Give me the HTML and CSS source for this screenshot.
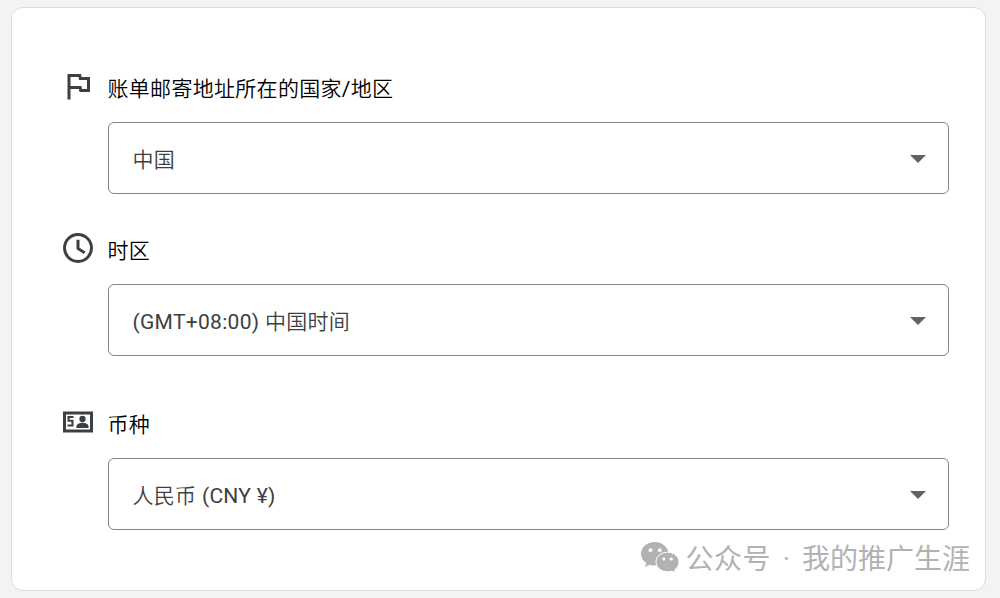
FILE: index.html
```html
<!DOCTYPE html>
<html lang="zh-CN">
<head>
    <meta charset="UTF-8">
    <meta name="viewport" content="width=device-width, initial-scale=1.0">
    <title>账单设置</title>
    <link rel="stylesheet" href="styles.css">
</head>

<body>
    <div class="card">
        <div class="field">
            <div class="field-header">
                <svg class="icon" viewBox="0 0 24 24"><path d="M12.36 6l.4 2H18v6h-3.36l-.4-2H7V6h5.36M14 4H5v17h2v-7h5.6l.4 2h7V6h-5.6L14 4z"/></svg>
                <span class="label"><span class="zh">账单邮寄地址所在的国家</span>/<span class="zh">地区</span></span>
            </div>
            <div class="select">
                <span class="zh">中国</span>
                <span class="arrow"></span>
            </div>
        </div>

        <div class="field">
            <div class="field-header">
                <svg class="icon" viewBox="0 0 24 24"><path d="M12 2a10 10 0 1 0 0 20 10 10 0 0 0 0-20zm0 18a8 8 0 1 1 0-16 8 8 0 0 1 0 16zM13 6.500h-2v6.300l4.900 3.200 1.100-1.700-4-2.500z"/></svg>
                <span class="label zh">时区</span>
            </div>
            <div class="select">
                <span>(GMT+08:00) <span class="zh">中国时间</span></span>
                <span class="arrow"></span>
            </div>
        </div>

        <div class="field field-currency">
            <div class="field-header">
                <svg class="icon" viewBox="0 0 24 24">
                    <path fill-rule="evenodd" d="M2 5h20v14H2zM4 7v10h16V7z"/>
                    <path d="M5 8h4v1.300H6.400v1.200H9V15H5v-1.300h2.600v-1.900H5z"/>
                    <circle cx="15" cy="10" r="2.100"/>
                    <path d="M11 16v-1.200c0-1.500 2.400-2.300 4-2.300s4 .8 4 2.300V16z"/>
                </svg>
                <span class="label zh">币种</span>
            </div>
            <div class="select">
                <span><span class="zh">人民币</span> (CNY ¥)</span>
                <span class="arrow"></span>
            </div>
        </div>
    </div>

    <div class="watermark">
        <svg class="wechat" viewBox="0 0 40 34">
            <path d="M15 1C7 1 1 6.400 1 13c0 3.700 2 6.900 5.200 9.100L5 26l4.800-2.300c1.700.6 3.400.9 5.200.9 7.700 0 13.600-5.300 13.600-11.600S22.700 1 15 1z"/>
            <path class="front" d="M27.500 11.200c-6.600 0-11.500 4.300-11.500 9.700s4.900 9.800 11.500 9.800c1.500 0 3-.2 4.300-.6l3.700 2-1-3.200c2.700-1.800 4.500-4.700 4.500-8 0-5.400-5-9.700-11.500-9.700z"/>
            <g class="eyes">
                <circle cx="10.500" cy="9.200" r="1.900"/>
                <circle cx="19.800" cy="9.200" r="1.900"/>
                <circle cx="23.800" cy="18" r="1.600"/>
                <circle cx="31.200" cy="18" r="1.600"/>
            </g>
        </svg>
        <span class="source">公众号</span>
        <span class="dot">·</span>
        <span>我的推广生涯</span>
    </div>
</body>
</html>
```
FILE: styles.css
```css
* {
    margin: 0;
    padding: 0;
    box-sizing: border-box;
}

:root {
    --page-bg: #f1f3f4;
    --card-border: #dadce0;
    --field-border: #80868b;
    --text-primary: #000;
    --text-secondary: #3c4043;
    --arrow: #5f6368;
    --watermark: #b2b2b2;
}

body {
    height: 598px;
    padding: 7px 14px 7px 11px;
    overflow: hidden;
    position: relative;
    background: var(--page-bg);
    color: var(--text-primary);
    font-family: Roboto, "Noto Sans CJK SC", sans-serif;
    font-size: 21px;
}

.card {
    height: 584px;
    padding: 60px 36px 0 48px;
    background: #fff;
    border: 1px solid var(--card-border);
    border-radius: 12px;
}

.field {
    margin-bottom: 36px;
}

.field-currency {
    margin-top: 48px;
}

.field-header {
    display: flex;
    align-items: center;
    gap: 12px;
    height: 36px;
    margin: 0 0 18px -0.5px;
}

.icon {
    width: 36px;
    height: 36px;
    fill: var(--text-secondary);
}

.label {
    padding-top: 2px;
    letter-spacing: 0.3px;
}

.select {
    display: flex;
    align-items: center;
    justify-content: space-between;
    height: 72px;
    margin-left: 48px;
    padding: 0 22px 0 23.5px;
    border: 1px solid var(--field-border);
    border-radius: 6px;
    color: var(--text-secondary);
    letter-spacing: 0.3px;
}

.zh {
    font-weight: 350;
}

.arrow {
    margin-top: 1px;
    border: 8px solid transparent;
    border-top-color: var(--arrow);
    border-bottom: 0;
}

/* Account name over the bottom right corner */
.watermark {
    position: absolute;
    right: 30px;
    bottom: 21px;
    display: flex;
    align-items: center;
    height: 40px;
    color: var(--watermark);
    font-family: "Noto Sans CJK SC", sans-serif;
    font-size: 28px;
    line-height: 40px;
    white-space: nowrap;
}

.wechat {
    width: 40px;
    height: 34px;
    margin: 2px 5px 0 0;
    fill: var(--watermark);
}

.wechat .front {
    stroke: #fff;
    stroke-width: 1;
}

.wechat .eyes {
    fill: #fff;
}

.source {
    letter-spacing: 0.5px;
}

.dot {
    width: 31px;
    padding-top: 3px;
    font-family: Roboto, sans-serif;
    text-align: center;
}
```
